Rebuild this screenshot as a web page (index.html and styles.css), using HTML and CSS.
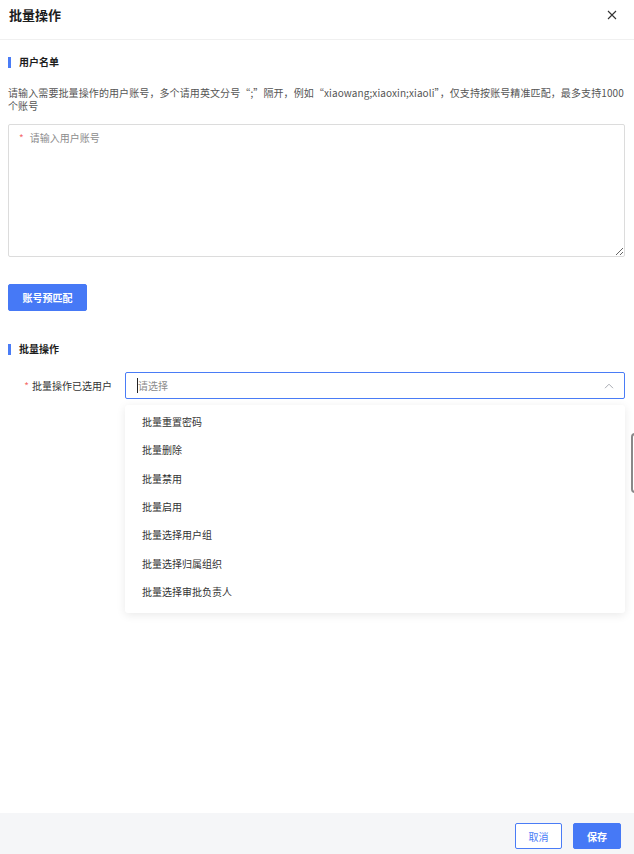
FILE: index.html
```html
<!DOCTYPE html>
<html lang="zh-CN">
<head>
<meta charset="utf-8">
<title>批量操作</title>
<link rel="stylesheet" href="styles.css">
</head>
<body>
<div class="dialog">
  <div class="header">
    <div class="title">批量操作</div>
    <svg class="close" width="10" height="10" viewBox="0 0 10 10"><path d="M1 1L9 9M9 1L1 9" stroke="#333" stroke-width="1.1" fill="none"/></svg>
  </div>
  <div class="body">
    <div class="section-title">用户名单</div>
    <div class="desc">请输入需要批量操作的用户账号，多个请用英文分号“;”隔开，例如“xiaowang;xiaoxin;xiaoli”，仅支持按账号精准匹配，最多支持1000个账号</div>
    <div class="textarea"><span class="req">*</span><span class="ph">请输入用户账号</span></div>
    <button class="btn primary match">账号预匹配</button>
    <div class="section-title second">批量操作</div>
    <div class="form-row">
      <div class="label"><span class="req">*</span>批量操作已选用户</div>
      <div class="select-wrap">
        <div class="select">
          <span class="caret"></span><span class="ph">请选择</span>
          <svg class="chev" width="10" height="6" viewBox="0 0 10 6"><path d="M1 5.2L5 1.2L9 5.2" stroke="#a8abb2" stroke-width="1" fill="none"/></svg>
        </div>
        <ul class="dropdown">
          <li>批量重置密码</li>
          <li>批量删除</li>
          <li>批量禁用</li>
          <li>批量启用</li>
          <li>批量选择用户组</li>
          <li>批量选择归属组织</li>
          <li>批量选择审批负责人</li>
        </ul>
      </div>
    </div>
  </div>
  <div class="footer">
    <button class="btn plain">取消</button>
    <button class="btn primary save">保存</button>
  </div>
  <div class="side-handle"></div>
</div>
</body>
</html>
```

FILE: styles.css
```css
html, body {
  margin: 0;
  padding: 0;
  background: #fff;
}
body {
  font-family: "Noto Sans CJK SC", "Noto Sans", sans-serif;
  color: #333;
  font-size: 10px;
}
.dialog {
  width: 634px;
  height: 854px;
  display: flex;
  flex-direction: column;
  position: relative;
  overflow: hidden;
}
.header {
  height: 30px;
  padding: 0 17px 9px 9px;
  border-bottom: 1px solid #f0f0f0;
  display: flex;
  align-items: center;
  justify-content: space-between;
}
.title {
  font-size: 13px;
  font-weight: 700;
  color: #1d1d1d;
  line-height: 30px;
}
.close {
  display: block;
}
.body {
  flex: 1;
  padding: 0 9px 0 8px;
}
.section-title {
  margin-top: 14px;
  height: 16px;
  line-height: 16px;
  font-size: 10px;
  font-weight: 700;
  color: #1d1d1d;
  display: flex;
  align-items: center;
}
.section-title::before {
  content: "";
  width: 3px;
  height: 11px;
  background: #4a7cf6;
  margin-right: 8px;
}
.section-title.second {
  margin-top: 30px;
}
.desc {
  margin-top: 16px;
  line-height: 13px;
  color: #555;
  font-size: 10px;
  letter-spacing: 0.1px;
}
.textarea {
  margin-top: 12px;
  height: 133px;
  box-sizing: border-box;
  border: 1px solid #dcdcdc;
  border-radius: 2px;
  padding: 6px 10px;
  line-height: 14px;
  resize: vertical;
  overflow: auto;
}
.req {
  color: #f56c6c;
  margin-right: 6px;
}
.ph {
  color: #8c8c8c;
}
.btn {
  font-family: inherit;
  font-size: 10px;
  border-radius: 2px;
  box-sizing: border-box;
  padding: 0;
  cursor: pointer;
}
.primary {
  background: #4679f6;
  border: 1px solid #4679f6;
  color: #fff;
  font-weight: 700;
}
.match {
  display: block;
  margin-top: 27px;
  width: 79px;
  height: 27px;
}
.form-row {
  margin-top: 15px;
  display: flex;
  align-items: flex-start;
}
.label {
  width: 104px;
  padding-right: 13px;
  text-align: right;
  line-height: 27px;
  color: #333;
}
.label .req {
  margin-right: 3px;
}
.select-wrap {
  flex: 1;
  position: relative;
}
.select {
  height: 27px;
  box-sizing: border-box;
  border: 1px solid #4a7cf6;
  border-radius: 2px;
  padding: 0 10px 0 11px;
  display: flex;
  align-items: center;
  line-height: 14px;
}
.caret {
  width: 1px;
  height: 15px;
  background: #222;
}
.select .ph {
  flex: 1;
  color: #8c8c8c;
}
.chev {
  display: block;
}
.dropdown {
  position: absolute;
  left: 0;
  right: 0;
  top: 33px;
  margin: 0;
  padding: 3px 0 7px;
  list-style: none;
  background: #fff;
  border-radius: 3px;
  box-shadow: 0 2px 10px rgba(0, 0, 0, 0.09);
  z-index: 2;
}
.dropdown li {
  height: 28.33px;
  line-height: 28.33px;
  padding-left: 17px;
  color: #333;
}
.footer {
  height: 41px;
  box-sizing: border-box;
  background: #f5f6f8;
  display: flex;
  justify-content: flex-end;
  align-items: flex-start;
  padding: 10px 13px 0 0;
  gap: 11px;
}
.plain {
  width: 47px;
  height: 26px;
  background: #fff;
  border: 1px solid #4a7cf6;
  color: #4a7cf6;
}
.save {
  width: 48px;
  height: 26px;
}
.side-handle {
  position: absolute;
  left: 631px;
  top: 433px;
  width: 12px;
  height: 60px;
  box-sizing: border-box;
  border: 2px solid #8a8a8a;
  border-radius: 4px;
  background: #fff;
}
```
